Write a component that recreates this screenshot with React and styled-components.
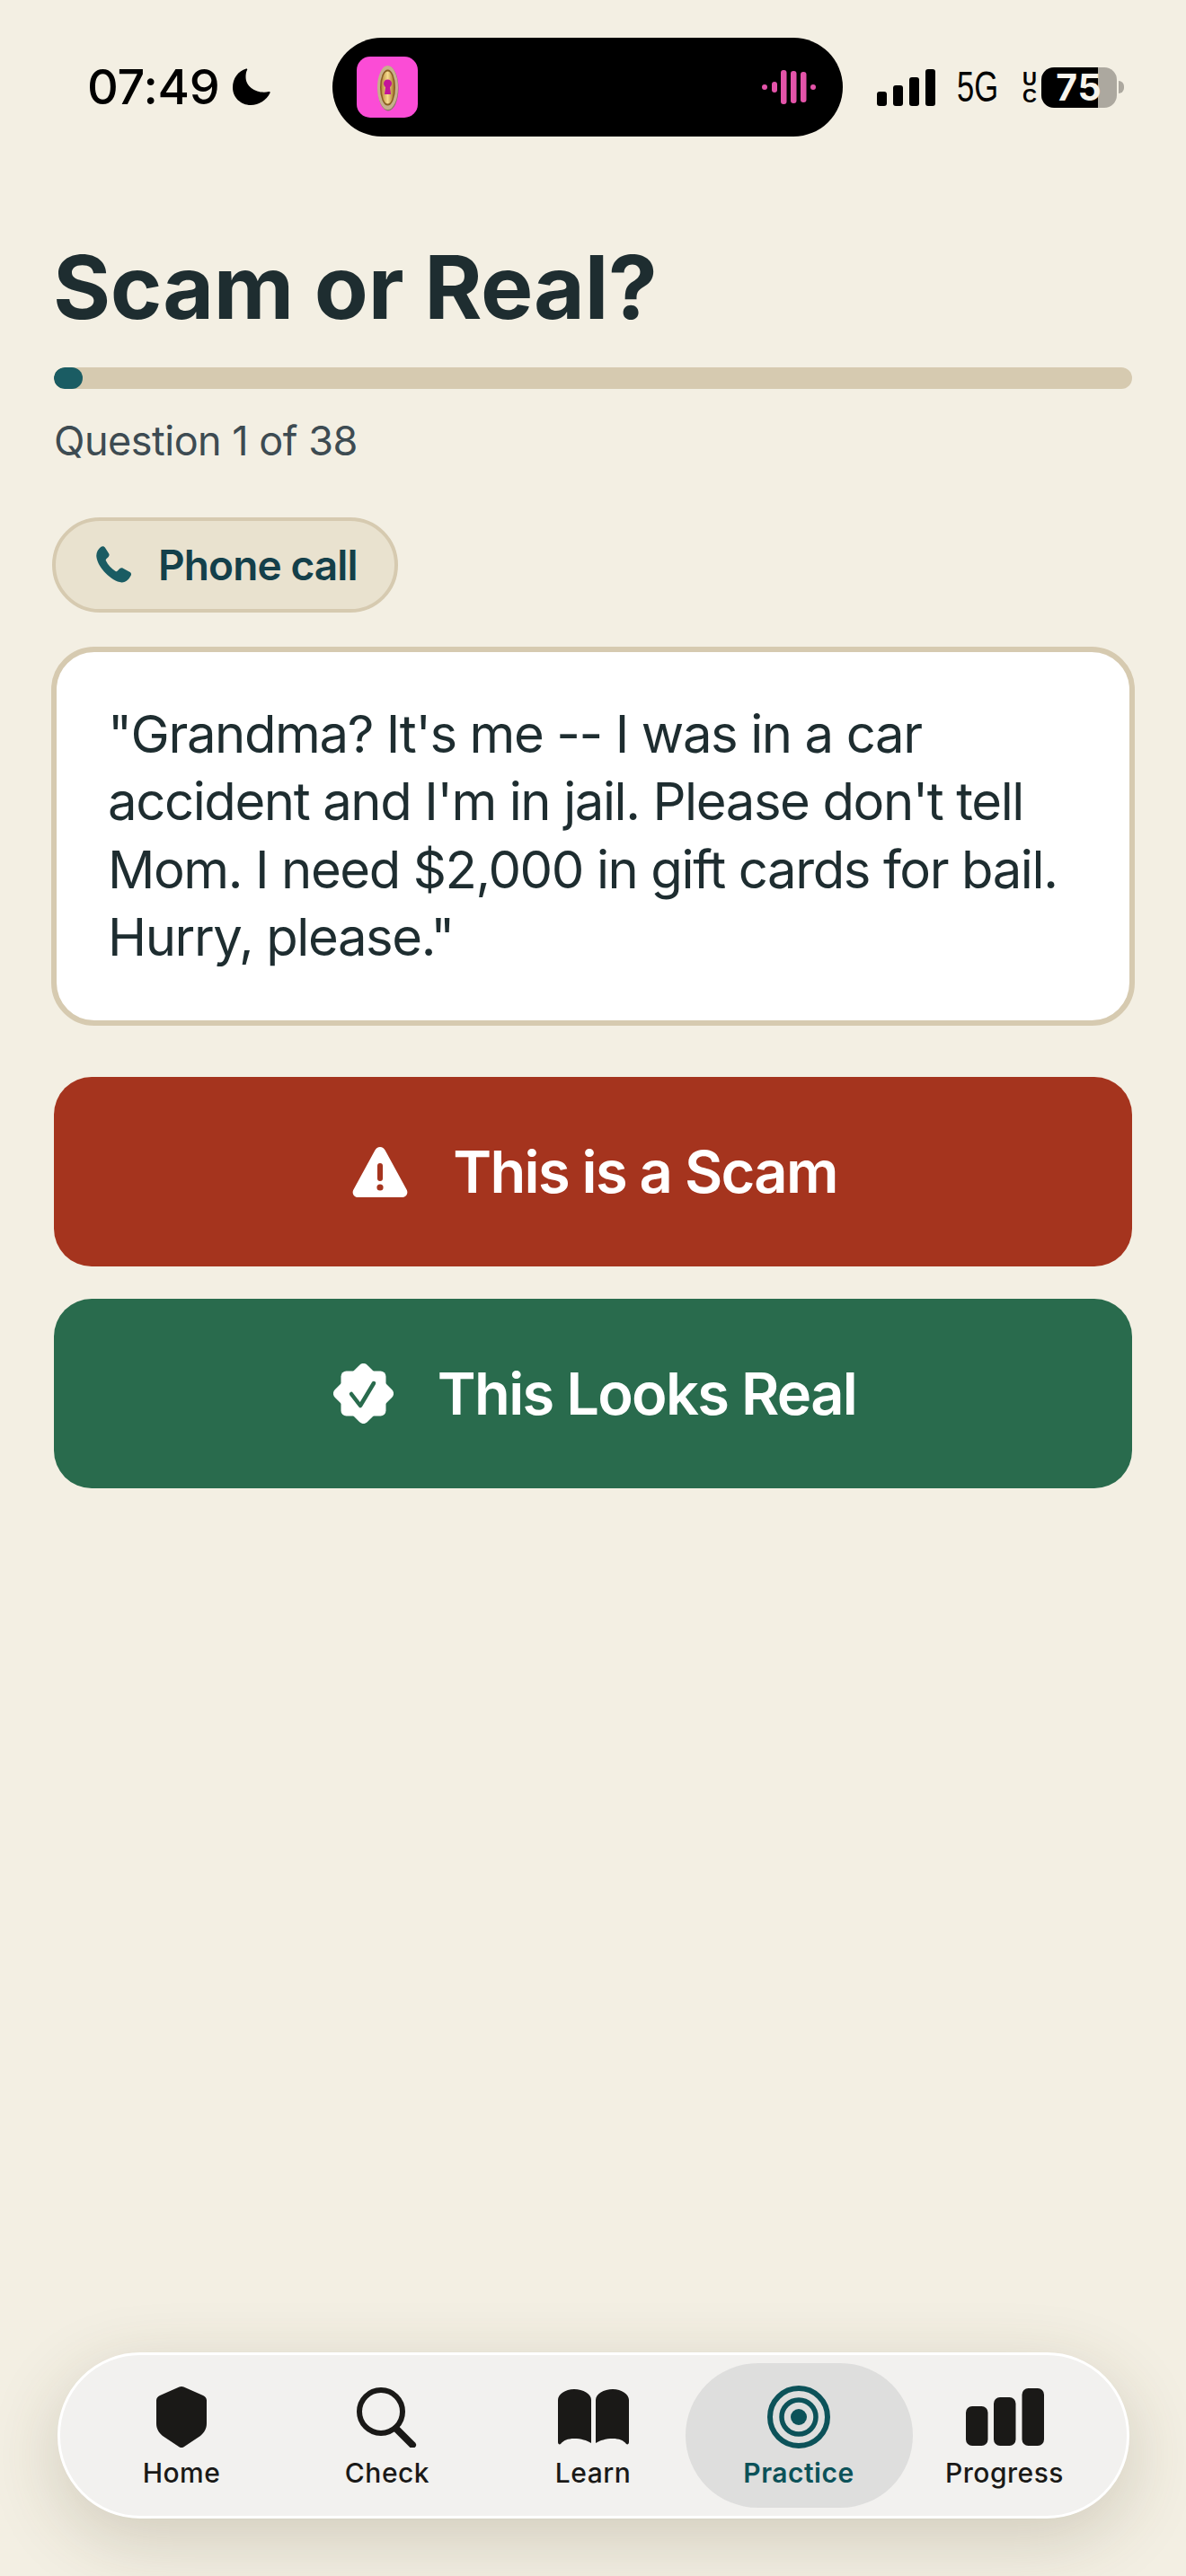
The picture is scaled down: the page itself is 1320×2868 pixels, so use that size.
import React from 'react';
import styled, { createGlobalStyle } from 'styled-components';

const GlobalStyle = createGlobalStyle`
  html, body {
    margin: 0;
    padding: 0;
    background: #f3efe3;
    font-family: 'Inter', 'Liberation Sans', sans-serif;
  }
  * { box-sizing: border-box; }
`;

const Page = styled.div`
  width: 1320px;
  min-height: 2868px;
  display: flex;
  flex-direction: column;
  background: #f3efe3;
`;

/* status bar */
const StatusBar = styled.header`
  display: flex;
  align-items: center;
  height: 110px;
  margin-top: 42px;
  padding-left: 97px;
`;
const Clock = styled.div`
  display: flex;
  align-items: center;
  gap: 14px;
  width: 273px;
  font-size: 54px;
  font-weight: 500;
  letter-spacing: -0.2px;
  line-height: 1;
  color: #000;
`;
const Island = styled.div`
  display: flex;
  align-items: center;
  justify-content: space-between;
  width: 568px;
  height: 110px;
  padding: 0 30px 0 27px;
  border-radius: 55px;
  background: #000;
`;
const StatusIcons = styled.div`
  display: flex;
  align-items: center;
  margin-left: 38px;
`;
const FiveG = styled.span`
  display: block;
  width: 50px;
  margin-left: 24px;
  font-family: 'Liberation Sans', sans-serif;
  font-size: 48px;
  line-height: 1;
  white-space: nowrap;
  color: #000;
  transform: scaleX(0.72);
  transform-origin: left center;
`;
const UltraCap = styled.span`
  display: flex;
  flex-direction: column;
  width: 18px;
  margin-left: 22px;
  margin-right: -19px;
  font-family: 'Liberation Sans', sans-serif;
  font-size: 22px;
  font-weight: 700;
  line-height: 19px;
  text-align: center;
  color: #000;
`;
const Battery = styled.div`
  display: flex;
  align-items: center;
  justify-content: center;
  width: 84px;
  height: 45px;
  margin-left: 23px;
  border-radius: 14px;
  background: linear-gradient(90deg, #000 75%, #aca89f 75%);
  font-size: 41px;
  font-weight: 700;
  letter-spacing: 1px;
  line-height: 1;
  color: #f7f4ec;
`;
const BatteryNub = styled.span`
  width: 6px;
  height: 14px;
  margin-left: 2px;
  border-radius: 0 6px 6px 0;
  background: #aca89f;
`;

/* question */
const Main = styled.main`
  flex: 1;
  display: flex;
  flex-direction: column;
  padding: 0 60px;
`;
const Title = styled.h1`
  margin: 119px 0 0 -1px;
  font-size: 98px;
  font-weight: 700;
  letter-spacing: -0.3px;
  line-height: 1;
  color: #1e2d30;
`;
const Track = styled.div`
  height: 24px;
  margin-top: 40px;
  border-radius: 12px;
  background: #d6cab0;
  overflow: hidden;
`;
const Fill = styled.div`
  height: 100%;
  border-radius: 12px;
  background: #1a5c63;
`;
const Counter = styled.p`
  margin: 29px 0 0;
  font-size: 45px;
  letter-spacing: -0.5px;
  line-height: 1.3;
  color: #3d4b52;
`;
const Chip = styled.div`
  display: inline-flex;
  align-items: center;
  gap: 28px;
  align-self: flex-start;
  height: 106px;
  margin: 55px 0 0 -2px;
  padding: 0 41px 0 45px;
  border: 4px solid #d6cab0;
  border-radius: 53px;
  background: #e9e2cf;
  font-size: 46px;
  font-weight: 600;
  letter-spacing: -0.9px;
  color: #14404a;
`;
const Card = styled.div`
  margin: 38px -3px 0;
  padding: 54.5px 50px 54.5px 57px;
  border: 6px solid #d6cab0;
  border-radius: 48px;
  background: #fff;
  font-size: 58px;
  letter-spacing: -1.4px;
  line-height: 75.4px;
  color: #1e2d30;
`;
const Answers = styled.div`
  display: flex;
  flex-direction: column;
  gap: 36px;
  margin-top: 57px;
`;
const AnswerButton = styled.button`
  display: flex;
  align-items: center;
  justify-content: center;
  gap: ${({ $gap }) => $gap}px;
  height: 211px;
  padding: 0 0 0 4px;
  border: 0;
  border-radius: 42px;
  background: ${({ $color }) => $color};
  font-family: inherit;
  font-size: 65px;
  font-weight: 600;
  letter-spacing: -1.7px;
  color: #fff;
`;

/* bottom nav */
const Nav = styled.nav`
  display: grid;
  grid-template-columns: repeat(5, 229px);
  justify-content: center;
  align-self: center;
  width: 1193px;
  height: 185px;
  margin-bottom: 64px;
  padding: 9px 0;
  border: 3px solid #fff;
  border-radius: 92px;
  background: #f2f1ef;
  box-shadow: 0 22px 80px rgba(70, 60, 30, 0.2);
`;
const NavItem = styled.div`
  position: relative;
  display: flex;
  flex-direction: column;
  align-items: center;
  color: ${({ $active }) => ($active ? '#0c5259' : '#1a1917')};
  font-size: 30px;
  font-weight: ${({ $active }) => ($active ? 600 : 500)};
  line-height: 36px;
  letter-spacing: 0.5px;

  ${({ $active }) =>
    $active &&
    `&::before {
      content: '';
      position: absolute;
      inset: 0 -12px;
      border-radius: 81px;
      background: #dededd;
    }`}

  & > * {
    position: relative;
  }
`;
const NavIcon = styled.div`
  display: flex;
  align-items: center;
  justify-content: center;
  height: 70px;
  margin: 25px 0 9px;
`;

const Moon = () => (
  <svg width="42" height="42" viewBox="0 0 42 42" fill="#000">
    <path d="M15 .5C6 3 0 11.5 0 21.5 0 32.5 9 41 20 41c9.5 0 17.5-5.5 21.5-13.5.5-1-.3-1.8-1.3-1.5C29 29 14 22 14.5 9c0-2.5.5-5 1.5-7C16.7 1 16 .2 15 .5Z" />
  </svg>
);

const AppIcon = () => (
  <svg width="68" height="68" viewBox="0 0 68 68">
    <defs>
      <linearGradient id="gold" x1="0" x2="1" y1="0" y2="0">
        <stop offset="0" stopColor="#b88a3c" />
        <stop offset="0.5" stopColor="#f6dc8e" />
        <stop offset="1" stopColor="#a9762f" />
      </linearGradient>
    </defs>
    <rect width="68" height="68" rx="15" fill="#fb4cd6" />
    <ellipse cx="35" cy="35.5" rx="11.5" ry="25" fill="#8b7a66" />
    <ellipse cx="34.5" cy="34.5" rx="11.5" ry="24.5" fill="#c7b08c" />
    <ellipse cx="34.5" cy="34.5" rx="8.5" ry="20" fill="#8a5e22" />
    <ellipse cx="34.5" cy="34.5" rx="7" ry="18" fill="url(#gold)" />
    <circle cx="34.5" cy="30" r="4.5" fill="#c4149a" />
    <path d="M32.5 31h4l1.6 11h-7.2Z" fill="#c4149a" />
  </svg>
);

const Waveform = () => (
  <svg width="60" height="38" viewBox="0 0 60 38" fill="#e354a9">
    <rect x="0" y="16" width="6" height="6" rx="3" />
    <rect x="11" y="13" width="6" height="12" rx="3" />
    <rect x="21" y="0" width="6.5" height="38" rx="3" />
    <rect x="32" y="1" width="6.5" height="36" rx="3" />
    <rect x="43" y="2" width="6.5" height="34" rx="3" />
    <rect x="54" y="16" width="6" height="6" rx="3" />
  </svg>
);

const Signal = () => (
  <svg width="65" height="41" viewBox="0 0 65 41" fill="#000">
    <rect x="0" y="25" width="11" height="16" rx="3" />
    <rect x="18" y="18" width="11" height="23" rx="3" />
    <rect x="36" y="9" width="11" height="32" rx="3" />
    <rect x="54" y="0" width="11" height="41" rx="3" />
  </svg>
);

const PhoneGlyph = () => (
  <svg width="41" height="41" viewBox="0 0 41 41" fill="#1a5c63">
    <path d="M5.5.8C7-.2 8.800.2 9.800 1.600l4.300 6.600c.8 1.200.6 2.700-.4 3.700l-2.400 2.300c-.6.600-.7 1.400-.4 2.100 2.300 4.600 6 9 10.700 11.600.8.400 1.600.3 2.200-.3l2.500-2.500c1-1 2.500-1.100 3.600-.4l7.800 4.300c1.400.9 1.800 2.700.8 4l-1.800 2.900C35 38 32 40.600 28.500 40.400 17 39.200 2 24 .4 12.200-.3 7.700 2 3.400 5.500.8Z" />
  </svg>
);

const WarningGlyph = () => (
  <svg width="62" height="56" viewBox="0 0 62 56">
    <path
      d="M31 0c2.500 0 4.500 1.500 5.700 3.800l24 44c1.900 3.700-.5 8.200-5 8.200H6.300c-4.500 0-6.900-4.500-5-8.200l24-44C26.500 1.500 28.500 0 31 0Z"
      fill="#fff"
    />
    <rect x="28" y="18" width="6" height="20" rx="3" fill="#a5341e" />
    <circle cx="31" cy="45" r="3.600" fill="#a5341e" />
  </svg>
);

const BadgeGlyph = () => (
  <svg width="67" height="67" viewBox="0 0 67 67">
    <g fill="#fff">
      <rect x="8.500" y="8.500" width="50" height="50" rx="6" />
      <rect x="8" y="8" width="51" height="51" rx="6" transform="rotate(45 33.500 33.500)" />
    </g>
    <path d="M20 34l10 13 15-25" fill="none" stroke="#296b4d" strokeWidth="4.500" strokeLinecap="round" strokeLinejoin="round" />
  </svg>
);

const ShieldGlyph = () => (
  <svg width="56" height="68" viewBox="0 0 56 68" fill="currentColor">
    <path d="M25.500.6c1.600-.7 3.400-.7 5 0L52 10c2.400 1 4 3 4 5.500V41c0 6-2.500 10-7 14L31 67c-1.800 1.400-4.200 1.400-6 0L7 55c-4.500-4-7-8-7-14V15.500C0 13 1.600 11 4 10Z" />
  </svg>
);

const SearchGlyph = () => (
  <svg width="68" height="68" viewBox="0 0 68 68" fill="none" stroke="currentColor" strokeLinecap="round">
    <circle cx="27" cy="28" r="24" strokeWidth="6" />
    <path d="M44 47l18 18" strokeWidth="8" />
  </svg>
);

const BookGlyph = () => (
  <svg width="79" height="62" viewBox="0 0 79 62" fill="currentColor">
    <path d="M0 12C0 6 8 0 18 0c10 0 19 5 19 12v48c-5-3-11-5-19-5-7 0-12 2-15 6-1.500 1-3 0-3-2Z" />
    <path d="M79 12C79 6 71 0 61 0 51 0 42 5 42 12v48c5-3 11-5 19-5 7 0 12 2 15 6 1.500 1 3 0 3-2Z" />
  </svg>
);

const TargetGlyph = () => (
  <svg width="70" height="70" viewBox="0 0 70 70" fill="none" stroke="currentColor">
    <circle cx="35" cy="35" r="32" strokeWidth="6" />
    <circle cx="35" cy="35" r="19" strokeWidth="5.500" />
    <circle cx="35" cy="35" r="9" fill="currentColor" stroke="none" />
  </svg>
);

const BarsGlyph = () => (
  <svg width="87" height="64" viewBox="0 0 87 64" fill="currentColor">
    <rect x="0" y="20" width="24.500" height="44" rx="7" />
    <rect x="31" y="10" width="24.500" height="54" rx="7" />
    <rect x="62.500" y="0" width="24.500" height="64" rx="7" />
  </svg>
);

const navItems = [
  { label: 'Home', icon: <ShieldGlyph /> },
  { label: 'Check', icon: <SearchGlyph /> },
  { label: 'Learn', icon: <BookGlyph /> },
  { label: 'Practice', icon: <TargetGlyph />, active: true },
  { label: 'Progress', icon: <BarsGlyph /> },
];

const App = () => {
  const answered = 1;
  const total = 38;

  return (
    <Page>
      <GlobalStyle />
      <StatusBar>
        <Clock>
          07:49
          <Moon />
        </Clock>
        <Island>
          <AppIcon />
          <Waveform />
        </Island>
        <StatusIcons>
          <Signal />
          <FiveG>5G</FiveG>
          <UltraCap>
            <span>U</span>
            <span>C</span>
          </UltraCap>
          <Battery>75</Battery>
          <BatteryNub />
        </StatusIcons>
      </StatusBar>

      <Main>
        <Title>Scam or Real?</Title>
        <Track>
          <Fill style={{ width: `${(answered / total) * 100}%` }} />
        </Track>
        <Counter>
          Question {answered} of {total}
        </Counter>
        <Chip>
          <PhoneGlyph />
          Phone call
        </Chip>
        <Card>
          "Grandma? It's me -- I was in a car accident and I'm in jail. Please don't tell Mom. I
          need $2,000 in gift cards for bail. Hurry, please."
        </Card>
        <Answers>
          <AnswerButton $color="#a5341e" $gap={50}>
            <WarningGlyph />
            This is a Scam
          </AnswerButton>
          <AnswerButton $color="#296b4d" $gap={49}>
            <BadgeGlyph />
            This Looks Real
          </AnswerButton>
        </Answers>
      </Main>

      <Nav>
        {navItems.map(item => (
          <NavItem key={item.label} $active={item.active}>
            <NavIcon>{item.icon}</NavIcon>
            <span>{item.label}</span>
          </NavItem>
        ))}
      </Nav>
    </Page>
  );
};

export default App;
